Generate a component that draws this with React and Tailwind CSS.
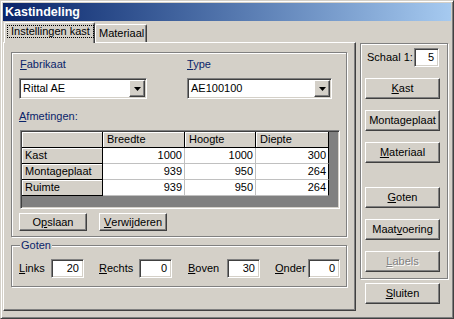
import React from 'react';

const raised =
  'border border-t-white border-l-white border-r-[#404040] border-b-[#404040] shadow-[inset_-1px_-1px_0_#808080]';
const sunken =
  'border border-t-[#808080] border-l-[#808080] border-r-white border-b-white shadow-[inset_1px_1px_0_#404040,inset_-1px_-1px_0_#d4d0c8]';
const etched = 'border border-[#808080] shadow-[inset_1px_1px_0_white,1px_1px_0_white]';

const Key = ({ children }) => <span className="underline underline-offset-[1px]">{children}</span>;

const Button = ({ children, className = '', disabled = false }) => (
  <div
    className={`flex items-center justify-center bg-[#d4d0c8] ${raised} ${className} ${
      disabled ? 'text-[#808080] [text-shadow:1px_1px_0_white]' : 'text-black'
    }`}
  >
    {children}
  </div>
);

const Combo = ({ value, className }) => (
  <div className={`flex h-[21px] bg-white p-[1px] ${sunken} ${className}`}>
    <div className="flex-1 pl-[2px] leading-[17px]">{value}</div>
    <div className={`flex h-[17px] w-[16px] items-center justify-center bg-[#d4d0c8] ${raised}`}>
      <svg width="7" height="4" viewBox="0 0 7 4">
        <path d="M0 0h7L3.5 4z" fill="black" />
      </svg>
    </div>
  </div>
);

const NumBox = ({ value, className }) => (
  <div className={`h-[19px] bg-white pr-[4px] text-right leading-[16px] ${sunken} ${className}`}>{value}</div>
);

const cols = [81, 82, 71, 73];
const head = ['', 'Breedte', 'Hoogte', 'Diepte'];
const rows = [
  ['Kast', 1000, 1000, 300],
  ['Montageplaat', 939, 950, 264],
  ['Ruimte', 939, 950, 264],
];

const Grid = () => (
  <div className={`ml-[1px] mt-[7px] h-[79px] w-[320px] bg-[#808080] ${sunken}`}>
    <div className="ml-[1px] mt-[1px] flex flex-col">
      <div className="flex">
        {head.map((h, i) => (
          <div
            key={i}
            style={{ width: cols[i] }}
            className="h-[16px] border-r border-b border-black bg-[#d4d0c8] pl-[4px] leading-[15px] shadow-[inset_1px_1px_0_white]"
          >
            {h}
          </div>
        ))}
      </div>
      {rows.map((r) => (
        <div key={r[0]} className="flex">
          {r.map((c, i) =>
            i === 0 ? (
              <div
                key={i}
                style={{ width: cols[i] }}
                className="h-[16px] border-r border-b border-black bg-[#d4d0c8] pl-[3px] leading-[15px] shadow-[inset_1px_1px_0_white]"
              >
                {c}
              </div>
            ) : (
              <div
                key={i}
                style={{ width: cols[i] }}
                className={`h-[16px] border-b border-r bg-white pr-[2px] text-right leading-[15px] ${
                  i === 3 ? 'border-r-black border-b-[#c0c0c0]' : 'border-[#c0c0c0]'
                }`}
              >
                {c}
              </div>
            )
          )}
        </div>
      ))}
    </div>
  </div>
);

export default function App() {
  return (
    <div
      className="flex h-[319px] w-[454px] flex-col border border-t-[#d4d0c8] border-l-[#d4d0c8] border-r-[#404040] border-b-[#404040] bg-[#d4d0c8] p-[2px] text-[11px] leading-[13px] text-black shadow-[inset_1px_1px_0_white,inset_-1px_-1px_0_#808080]"
      style={{ fontFamily: '"Liberation Sans", Arial, sans-serif' }}
    >
      {/* title bar */}
      <div className="flex h-[18px] items-center bg-linear-to-r from-[#0a246a] to-[#a6caf0] pl-[2px] text-[12.5px] font-bold text-white">
        Kastindeling
      </div>

      <div className="flex pt-[1px]">
        {/* left: tabs */}
        <div className="flex w-[353px] flex-col">
          <div className="flex h-[20px] items-end">
            <div className="relative z-10 mb-[-1px] ml-[1px] flex h-[21px] w-[91px] items-start rounded-t-[2px] border-t border-l border-r border-t-white border-l-white border-r-[#404040] bg-[#d4d0c8] pt-[2px] pl-[2px] shadow-[inset_-1px_0_0_#808080]">
              <div className="border border-dotted border-black px-[3px] leading-[11px]">Instellingen kast</div>
            </div>
            <div className="flex h-[18px] w-[52px] items-start rounded-t-[2px] border-t border-l border-r border-t-white border-l-white border-r-[#404040] bg-[#d4d0c8] pt-[2px] pl-[3px] shadow-[inset_-1px_0_0_#808080]">
              Materiaal
            </div>
          </div>

          <div className={`h-[269px] ${raised}`}>
            {/* Fabrikaat / Type / Afmetingen group */}
            <div className={`ml-[7px] mt-[9px] flex h-[185px] w-[336px] flex-col pl-[7px] pt-[5px] ${etched}`}>
              <div className="flex">
                <div className="flex w-[128px] flex-col">
                  <div className="pl-[1px] text-[#0a246a]">
                    <Key>F</Key>abrikaat
                  </div>
                  <Combo value="Rittal AE" className="mt-[7px] w-[128px]" />
                </div>
                <div className="ml-[40px] flex w-[145px] flex-col">
                  <div className="text-[#0a246a]">
                    <Key>T</Key>ype
                  </div>
                  <Combo value="AE100100" className="mt-[7px] w-[145px]" />
                </div>
              </div>
              <div className="mt-[11px] text-[#0a246a]">
                <Key>A</Key>fmetingen:
              </div>
              <Grid />
              <div className="mt-[4px] flex">
                <Button className="h-[18px] w-[68px]">
                  O<Key>p</Key>slaan
                </Button>
                <Button className="ml-[12px] h-[18px] w-[68px]">
                  <Key>V</Key>erwijderen
                </Button>
              </div>
            </div>

            {/* Goten group */}
            <div className={`relative ml-[7px] mt-[8px] flex h-[42px] w-[336px] items-start pl-[7px] pt-[13px] ${etched}`}>
              <div className="absolute -top-[7px] left-[8px] bg-[#d4d0c8] px-[1px] text-[#0a246a]">Goten</div>
              <div className="w-[32px] leading-[19px]">
                <Key>L</Key>inks
              </div>
              <NumBox value="20" className="w-[33px]" />
              <div className="ml-[15px] w-[40px] leading-[19px]">
                <Key>R</Key>echts
              </div>
              <NumBox value="0" className="w-[33px]" />
              <div className="ml-[16px] w-[39px] leading-[19px]">
                <Key>B</Key>oven
              </div>
              <NumBox value="30" className="w-[33px]" />
              <div className="ml-[15px] w-[33px] leading-[19px]">
                <Key>O</Key>nder
              </div>
              <NumBox value="0" className="w-[32px]" />
            </div>
          </div>
        </div>

        {/* right column */}
        <div className="ml-[4px] flex w-[88px] flex-col">
          <div className={`mt-[21px] flex h-[236px] flex-col pl-[4px] pt-[4px] ${etched}`}>
            <div className="flex items-center pl-[2px]">
              <span className="w-[47px]">Schaal 1:</span>
              <NumBox value="5" className="w-[25px] pr-[3px]" />
            </div>
            <Button className="mt-[11px] h-[21px] w-[75px]">
              <Key>K</Key>ast
            </Button>
            <Button className="mt-[11px] h-[21px] w-[75px]">Montageplaat</Button>
            <Button className="mt-[11px] h-[21px] w-[75px]">
              <Key>M</Key>ateriaal
            </Button>
            <Button className="mt-[24px] h-[21px] w-[75px]">
              <Key>G</Key>oten
            </Button>
            <Button className="mt-[11px] h-[21px] w-[75px]">
              Maat<Key>v</Key>oering
            </Button>
            <Button disabled className="mt-[11px] h-[21px] w-[75px]">
              <Key>L</Key>abels
            </Button>
          </div>
          <Button className="ml-[5px] mt-[4px] h-[21px] w-[75px]">
            <Key>S</Key>luiten
          </Button>
        </div>
      </div>
    </div>
  );
}
